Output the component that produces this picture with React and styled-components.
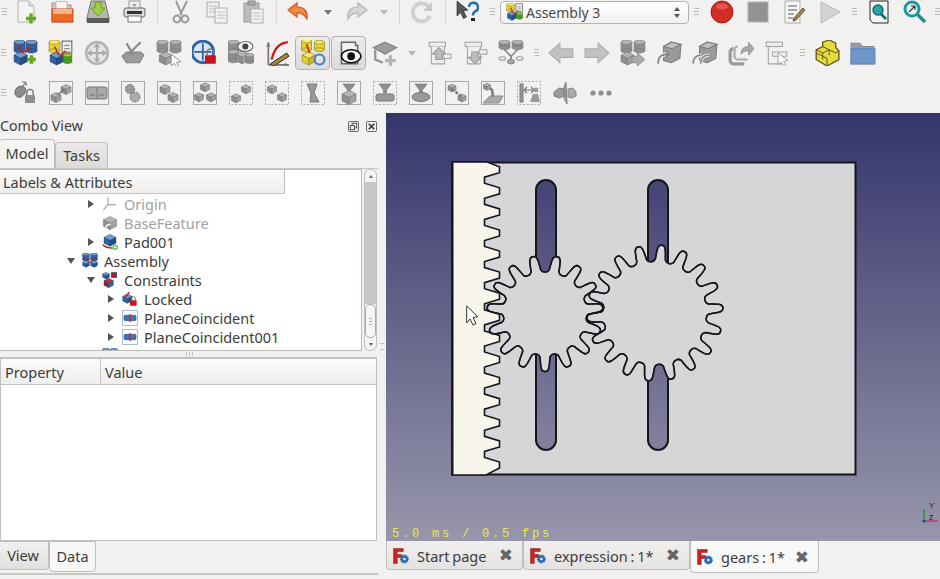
// App.jsx - FreeCAD window with the assembly workbench and a gears model
import React from "react";
import styled, { createGlobalStyle } from "styled-components";

const GlobalStyle = createGlobalStyle`
  html, body { margin: 0; padding: 0; background: #f2f1f0; }
  body { font-family: "Noto Sans", "Open Sans", sans-serif; font-size: 14px; color: #3c3c3c; }
`;

const Window = styled.div`
  width: 940px;
  height: 579px;
  overflow: hidden;
  display: flex;
  flex-direction: column;
  background: #f2f1f0;
`;

const Toolbars = styled.div`
  display: flex;
  flex-direction: column;
  height: 113px;
  flex: none;
`;

const Bar = styled.div`
  display: flex;
  align-items: center;
  height: ${(p) => p.$h}px;
  padding-bottom: ${(p) => p.$pb || 0}px;
  box-sizing: content-box;
  white-space: nowrap;
`;

const Grip = styled.div`
  flex: none;
  width: ${(p) => p.$w || 8}px;
  height: 10px;
  display: flex;
  justify-content: center;
  background: repeating-linear-gradient(#bdbbb8 0 1px, transparent 1px 3px) center / 5px 9px no-repeat;
`;

const Tool = styled.div`
  flex: none;
  box-sizing: border-box;
  width: ${(p) => p.$w || 36}px;
  height: 34px;
  display: flex;
  align-items: center;
  justify-content: center;
  ${(p) =>
    p.$active &&
    `border: 1px solid #b4b2af; border-radius: 4px; margin: 0 1px 0 0; width: 35px;
     background: linear-gradient(#ececea, #dcdbd9);`}
`;

const Separator = styled.div`
  flex: none;
  width: 1px;
  height: 24px;
  margin: 0 ${(p) => p.$m || 6}px;
  background: #dad8d5;
`;

const Caret = styled.div`
  flex: none;
  width: ${(p) => p.$w || 18}px;
  display: flex;
  justify-content: center;
  &::after {
    content: "";
    border-left: 4px solid transparent;
    border-right: 4px solid transparent;
    border-top: 5px solid ${(p) => p.$c || "#b9b9b9"};
  }
`;

const Combo = styled.div`
  flex: none;
  box-sizing: border-box;
  width: 189px;
  height: 23px;
  display: flex;
  align-items: center;
  gap: 2px;
  padding: 0 8px 0 5px;
  border: 1px solid #b5b3b0;
  border-radius: 4px;
  background: linear-gradient(#ffffff, #f1f0ef);
  font-size: 14px;
  color: #4a4a4a;
`;

const ComboLabel = styled.span`
  flex: 1;
`;

const Spinner = styled.div`
  display: flex;
  flex-direction: column;
  gap: 3px;
  &::before, &::after { content: ""; border-left: 3px solid transparent; border-right: 3px solid transparent; }
  &::before { border-bottom: 4px solid #555; }
  &::after { border-top: 4px solid #555; }
`;

const Main = styled.div`
  flex: 1;
  display: flex;
  min-height: 0;
`;

const Dock = styled.div`
  flex: none;
  width: 378px;
  display: flex;
  flex-direction: column;
`;

const VSplit = styled.div`
  flex: none;
  width: 8px;
  display: flex;
  align-items: center;
  justify-content: center;
  &::after { content: ""; width: 4px; height: 5px; border-top: 1px solid #c4c2bf; border-bottom: 1px solid #c4c2bf; }
`;

const TitleRow = styled.div`
  height: 26px;
  display: flex;
  align-items: center;
  gap: 7px;
  flex: none;
  padding-right: 1px;
`;

const Title = styled.div`
  flex: 1;
  font-size: 14.2px;
  padding-bottom: 2px;
`;

const TabRow = styled.div`
  display: flex;
  align-items: flex-end;
  height: ${(p) => p.$h}px;
  flex: none;
`;

const Tab = styled.div`
  box-sizing: border-box;
  width: ${(p) => p.$w}px;
  height: ${(p) => (p.$active ? p.$h + 3 : p.$h)}px;
  display: flex;
  align-items: center;
  justify-content: center;
  padding-bottom: 2px;
  border: 1px solid #c1bfbc;
  border-radius: ${(p) => (p.$up ? "0 0 4px 4px" : "4px 4px 0 0")};
  background: ${(p) =>
    p.$active ? "#f7f7f6" : p.$up ? "linear-gradient(#f2f1f0, #e1e0de)" : "linear-gradient(#ebeae8, #dcdbd9)"};
  font-size: 14.5px;
  flex: none;
`;

const ModelTab = styled(Tab)`
  border-bottom: none;
  ${(p) => p.$active && "background: #f4f4f3; margin-left: -1px;"}
`;

const ViewTab = styled(Tab)`
  ${(p) => !p.$active && "margin-left: -3px;"}
`;

const TreePane = styled.div`
  height: 183px;
  display: flex;
  gap: 2px;
  flex: none;
  border-top: 1px solid #c9c7c4;
  box-sizing: border-box;
`;

const TreeBox = styled.div`
  width: 363px;
  margin-left: -1px;
  box-sizing: border-box;
  border: 1px solid #bcbab7;
  background: #fff;
  overflow: hidden;
  flex: none;
`;

const TreeHeader = styled.div`
  box-sizing: border-box;
  width: 285px;
  height: 24px;
  padding-left: 3px;
  display: flex;
  align-items: center;
  border-right: 1px solid #c4c2bf;
  border-bottom: 1px solid #c4c2bf;
  background: linear-gradient(#fafafa, #efeeed);
  font-size: 14.5px;
`;

const TreeRow = styled.div`
  height: 19px;
  display: flex;
  align-items: center;
  padding-left: ${(p) => 42 + p.$depth * 20}px;
  color: ${(p) => (p.$muted ? "#a2a2a2" : "#3c3c3c")};
  font-size: 14.5px;
`;

const Twisty = styled.div`
  width: 18px;
  margin-right: 2px;
  flex: none;
  display: flex;
  justify-content: center;
  &::after {
    content: "";
    ${(p) =>
      p.$kind === "open"
        ? "border-left: 4px solid transparent; border-right: 4px solid transparent; border-top: 6px solid #555;"
        : p.$kind === "closed"
        ? "border-top: 4px solid transparent; border-bottom: 4px solid transparent; border-left: 6px solid #555;"
        : ""}
  }
`;

const RowLabel = styled.span`
  margin-left: 6px;
`;

const Scrollbar = styled.div`
  width: 13px;
  flex: none;
  box-sizing: border-box;
  border: 1px solid #c3c1be;
  border-radius: 6px;
  display: flex;
  flex-direction: column;
  background: #f4f3f2;
  overflow: hidden;
`;

const ScrollEnd = styled.div`
  height: 12px;
  flex: none;
  display: flex;
  align-items: center;
  justify-content: center;
  &::after {
    content: "";
    border-left: 2px solid transparent;
    border-right: 2px solid transparent;
    ${(p) => (p.$up ? "border-bottom: 3px solid #666;" : "border-top: 3px solid #666;")}
  }
`;

const ScrollTrack = styled.div`
  flex: 1;
  background: #c9c7c5;
`;

const ScrollThumb = styled.div`
  height: 34px;
  flex: none;
  box-sizing: border-box;
  border: 1px solid #aaa8a5;
  border-radius: 5px;
  background: #f6f6f5;
  display: flex;
  align-items: center;
  justify-content: center;
  &::after { content: ""; width: 3px; height: 7px; background: repeating-linear-gradient(#aaa 0 1px, transparent 1px 3px); }
`;

const HSplit = styled.div`
  height: 6px;
  flex: none;
  display: flex;
  justify-content: center;
  align-items: center;
  &::after { content: ""; width: 7px; height: 4px; background: repeating-linear-gradient(90deg, #c4c2bf 0 1px, transparent 1px 3px); }
`;

const PropertyBox = styled.div`
  width: 377px;
  height: 184px;
  flex: none;
  box-sizing: border-box;
  border: 1px solid #c1bfbc;
  border-top-width: 2px;
  background: #fff;
`;

const PropertyHeader = styled.div`
  height: 25px;
  display: grid;
  grid-template-columns: 99px 1fr;
  border-bottom: 1px solid #c4c2bf;
  background: linear-gradient(#fafafa, #efeeed);
`;

const HeaderCell = styled.div`
  padding-left: 4px;
  display: flex;
  align-items: center;
  font-size: 14.5px;
  & + & { border-left: 1px solid #c9c7c4; }
`;

const BottomTabs = styled.div`
  flex: none;
  height: 32px;
  display: flex;
  align-items: flex-start;
  border-bottom: 2px solid #c8c6c3;
`;

const RightColumn = styled.div`
  flex: 1;
  display: flex;
  flex-direction: column;
  min-width: 0;
`;

const Viewport = styled.div`
  position: relative;
  height: 428px;
  flex: none;
  background: linear-gradient(#35356c, #9796ab);
  overflow: hidden;
`;

const Stats = styled.div`
  position: absolute;
  left: 6px;
  bottom: 0;
  font-family: "Liberation Mono", monospace;
  font-size: 12px;
  letter-spacing: 2.8px;
  color: #eaea4a;
`;

const DocTabs = styled.div`
  display: flex;
  align-items: flex-start;
  flex: 1;
`;

const DocTab = styled.div`
  flex: none;
  box-sizing: border-box;
  width: ${(p) => p.$w}px;
  height: ${(p) => (p.$active ? 32 : 29)}px;
  padding: 1px 0 0 5px;
  display: flex;
  align-items: center;
  border: 1px solid #c1bfbc;
  border-top: none;
  border-radius: 0 0 4px 4px;
  background: ${(p) => (p.$active ? "#f8f8f7" : "linear-gradient(#f0efee, #e4e3e1)")};
  font-size: 14.5px;
  word-spacing: -1px;
`;

const DocTabLabel = styled.span`
  margin-left: 7px;
  flex: 1;
`;

const DocClose = styled.span`
  margin-right: 9px;
  font-size: 17px;
  line-height: 1;
  font-weight: 700;
  color: #666;
  font-family: "DejaVu Sans", sans-serif;
`;

/* icon parts */
const GR = { t: "#b4b4b4", l: "#8f8f8f", r: "#a2a2a2", s: "#777" };
const BL = { t: "#6f9fd0", l: "#2f62a0", r: "#234f88", s: "#1c3f70" };
const YL = { t: "#f5ec6a", l: "#e3d335", r: "#c9b92a", s: "#8b8120" };

const Cube = ({ x, y, s = 6, c = GR }) => (
  <g strokeWidth="0.6" stroke={c.s}>
    <polygon fill={c.t} points={`${x},${y - s * 0.5} ${x + s},${y} ${x},${y + s * 0.5} ${x - s},${y}`} />
    <polygon fill={c.l} points={`${x - s},${y} ${x},${y + s * 0.5} ${x},${y + s * 1.5} ${x - s},${y + s}`} />
    <polygon fill={c.r} points={`${x + s},${y} ${x},${y + s * 0.5} ${x},${y + s * 1.5} ${x + s},${y + s}`} />
  </g>
);

const Cyl = ({ x, y, w = 5, h = 8, c = GR }) => (
  <g strokeWidth="0.6" stroke={c.s}>
    <rect x={x - w} y={y} width={w * 2} height={h} fill={c.l} />
    <ellipse cx={x} cy={y + h} rx={w} ry={w * 0.4} fill={c.l} />
    <ellipse cx={x} cy={y} rx={w} ry={w * 0.4} fill={c.t} />
  </g>
);

const Plus = ({ x, y, r = 5 }) => (
  <path d={`M${x - r} ${y}h${r * 2}M${x} ${y - r}v${r * 2}`} stroke="#63a81e" strokeWidth="3.4" />
);

const Lock = ({ x, y, c = "#c8141c" }) => (
  <g>
    <path d={`M${x + 1.8} ${y}v-2.4a3.2 3.2 0 0 1 6.4 0v2.4`} fill="none" stroke="#777" strokeWidth="1.4" />
    <rect x={x} y={y} width="10" height="8" rx="1" fill={c} />
  </g>
);

const Frame = ({ dash }) => (
  <rect x="0.5" y="0.5" width="23" height="23" fill="none" stroke="#a9a9a9" strokeDasharray={dash ? "2 1.6" : "none"} />
);

const Funnel = ({ x = 12, y = 4 }) => (
  <polygon points={`${x - 6},${y} ${x + 6},${y} ${x + 1.5},${y + 6} ${x + 1.5},${y + 9} ${x - 1.5},${y + 9} ${x - 1.5},${y + 6}`} fill="#8f8f8f" stroke="#707070" strokeWidth="0.6" />
);

const DocSheet = ({ x, y, w, h, fill = "#f6f6f6", stroke = "#aaa" }) => (
  <g>
    <rect x={x} y={y} width={w} height={h} fill={fill} stroke={stroke} />
    <path d={`M${x + 2} ${y + 4}h${w - 4}M${x + 2} ${y + 7}h${w - 4}M${x + 2} ${y + 10}h${w - 4}`} stroke={stroke} strokeWidth="0.8" />
  </g>
);

const Svg = ({ size = 26, children }) => (
  <svg width={size} height={size} viewBox="0 0 24 24">
    {children}
  </svg>
);

const icons = {
  newDoc: (
    <>
      <path d="M4 1h11l5 5v16H4z" fill="#f4f4f2" stroke="#b5b5b2" />
      <path d="M15 1v5h5" fill="#ddd" stroke="#b5b5b2" />
      <Plus x={17} y={18.5} />
    </>
  ),
  open: (
    <>
      <path d="M2 3h8l2 2h9v17H2z" fill="#c9c4bb" stroke="#999" />
      <rect x="6" y="1.5" width="11" height="12" fill="#f6f5f2" stroke="#bbb" />
      <rect x="2" y="9" width="21" height="13" fill="#ee6a22" stroke="#c4501a" />
      <rect x="3" y="9" width="19" height="5" fill="#f6b48a" />
    </>
  ),
  save: (
    <>
      <path d="M5 1h14l4 17v4H1v-4z" fill="#b5b7ae" stroke="#777" />
      <rect x="1" y="18" width="22" height="5" fill="#5a5a57" />
      <path d="M9 2h6v6h4l-7 8-7-8h4z" fill="#9ed13f" stroke="#6a9a1c" />
    </>
  ),
  print: (
    <>
      <rect x="7" y="1" width="11" height="8" fill="#f0f0f0" stroke="#999" />
      <path d="M10 4h5l-2.5 3z" fill="#999" />
      <rect x="2" y="8" width="21" height="9" rx="2" fill="#dcdcdc" stroke="#666" />
      <rect x="5" y="11" width="15" height="3" fill="#333" />
      <rect x="6" y="16" width="13" height="6" fill="#fff" stroke="#777" />
    </>
  ),
  cut: (
    <>
      <path d="M7 1l6 14M18 1l-7 14" stroke="#9c9c9c" strokeWidth="2" />
      <circle cx="8" cy="19" r="3.4" fill="none" stroke="#999" strokeWidth="2" />
      <circle cx="16" cy="19" r="3.4" fill="none" stroke="#999" strokeWidth="2" />
    </>
  ),
  copy: (
    <>
      <DocSheet x={2} y={2} w={12} h={15} fill="#efefef" stroke="#aeaeae" />
      <DocSheet x={10} y={8} w={12} h={15} fill="#f3f3f3" stroke="#aeaeae" />
    </>
  ),
  paste: (
    <>
      <rect x="3" y="3" width="15" height="19" fill="#bcbcbc" stroke="#999" />
      <rect x="7" y="1" width="7" height="4" fill="#aaa" stroke="#888" />
      <DocSheet x={10} y={9} w={12} h={14} fill="#f3f3f3" stroke="#aeaeae" />
    </>
  ),
  undo: <path d="M10 3L1 10l9 7v-4c5 0 7 1 10 6 1-8-3-12-10-12z" fill="#f08a3c" stroke="#d8541a" strokeWidth="1.2" />,
  redo: <path d="M14 3l9 7-9 7v-4c-5 0-7 1-10 6-1-8 3-12 10-12z" fill="#d6d6d6" stroke="#b4b4b4" strokeWidth="1.2" />,
  refresh: (
    <>
      <path d="M19 7a9 9 0 1 0 1 9" fill="none" stroke="#d0d0d0" strokeWidth="4" />
      <path d="M22 2v9h-9z" fill="#c8c8c8" />
    </>
  ),
  whats: (
    <>
      <path d="M2 1l11 9-4.5 1 3 6-3 1.5-3-6L2 16z" fill="#555" stroke="#222" strokeWidth="0.6" />
      <path d="M14 7a4.5 4.5 0 1 1 6 4.5c-2 1-2 2-2 4" fill="none" stroke="#1f6fae" strokeWidth="2.4" />
      <rect x="16" y="18" width="4" height="3" fill="#222" />
    </>
  ),
  record: (
    <>
      <circle cx="12" cy="12" r="11" fill="#cf2d26" stroke="#a81f1a" />
      <ellipse cx="12" cy="6.5" rx="6" ry="3" fill="#e2584e" />
    </>
  ),
  stop: <rect x="2" y="2" width="20" height="20" fill="#929292" stroke="#b4b4b4" />,
  macro: (
    <>
      <path d="M3 1h15v22H3z" fill="#f6f6f4" stroke="#aaa" />
      <path d="M6 6h9M6 10h9M6 14h6M6 18h5" stroke="#555" />
      <path d="M12 18l9-10 2 2-9 10-3 1z" fill="#b08a3c" stroke="#333" strokeWidth="0.8" />
    </>
  ),
  play: <polygon points="3,2 22,12 3,23" fill="#d2d2d2" stroke="#b8b8b8" />,
  zoomDoc: (
    <>
      <path d="M3 1h18v22H6l-3-3z" fill="#f2f4f2" stroke="#222" />
      <circle cx="11" cy="10" r="5" fill="#29a6a6" stroke="#0f6a6a" strokeWidth="1.4" />
      <path d="M14 14l5 5" stroke="#0f6a6a" strokeWidth="2.6" />
    </>
  ),
  zoom: (
    <>
      <circle cx="9" cy="9" r="7" fill="#eaf6f6" stroke="#1c9a9c" strokeWidth="3" />
      <path d="M6 12l6-6M12 6h-4M12 6v4" stroke="#333" strokeWidth="1.2" />
      <path d="M14 14l8 8" stroke="#1c8f90" strokeWidth="3.6" />
    </>
  ),
  addAsm: (
    <>
      <Cyl x={7} y={2} c={BL} /><Cyl x={18} y={2} c={BL} />
      <Cube x={8} y={14} c={BL} />
      <path d="M6 4l4 8M18 5l-6 7" stroke="#c9201a" strokeWidth="1.4" />
      <Plus x={18} y={18} r={4} />
    </>
  ),
  addPart: (
    <>
      <Cyl x={6} y={2} c={YL} />
      <DocSheet x={13} y={1} w={9} h={11} fill="#eee" stroke="#666" />
      <Cube x={8} y={14} c={BL} />
      <Cyl x={18} y={14} w={4} h={6} c={{ t: "#9ed13f", l: "#4ea21e", s: "#2f7410" }} />
      <path d="M6 6l4 8M16 10l-5 5" stroke="#c9201a" strokeWidth="1.4" />
    </>
  ),
  navCircle: (
    <>
      <circle cx="12" cy="12" r="10" fill="#e4e4e4" stroke="#b4b4b4" strokeWidth="2.4" />
      <path d="M12 4v16M4 12h16" stroke="#b0b0b0" strokeWidth="2" />
      <path d="M12 3l3 4H9zM12 21l3-4H9zM3 12l4-3v6zM21 12l-4-3v6z" fill="#a8a8a8" />
    </>
  ),
  insert: (
    <>
      <path d="M2 15l4-4h13l3 3-4 7H6z" fill="#9a9a9a" stroke="#808080" />
      <path d="M8 13L19 2M12 13L6 3" stroke="#8a8a8a" strokeWidth="2" />
    </>
  ),
  pickGrey: (
    <>
      <Cyl x={6} y={2} /><Cyl x={18} y={2} />
      <Cube x={9} y={14} />
      <path d="M14 13l9 7-4 .6 2 3-2 1-2-3-3 2z" fill="#fff" stroke="#777" strokeWidth="0.7" />
    </>
  ),
  lockNav: (
    <>
      <circle cx="10" cy="11" r="10" fill="#dfe6f2" stroke="#2e62ad" strokeWidth="2.6" />
      <path d="M10 3v16M2 11h16" stroke="#2e62ad" strokeWidth="1.6" />
      <Lock x={12} y={14} />
    </>
  ),
  eyeAsm: (
    <>
      <Cyl x={5} y={2} /><Cyl x={5} y={11} />
      <Cube x={13} y={13} /><Cyl x={20} y={14} w={4} h={6} />
      <ellipse cx="16" cy="6" rx="7" ry="4.6" fill="#f4f4f4" stroke="#666" />
      <circle cx="16" cy="6" r="2.8" fill="#444" />
    </>
  ),
  axes: (
    <>
      <path d="M4 23V2M4 23h19" stroke="#777" strokeWidth="1.6" />
      <path d="M4 2L2 6h4zM23 23l-4-2v4z" fill="#777" />
      <path d="M7 18C10 6 15 3 22 2" fill="none" stroke="#c8141c" strokeWidth="2" />
      <path d="M6 22L21 12l2 3L9 24z" fill="#b0873c" stroke="#222" strokeWidth="0.9" />
    </>
  ),
  asmYellow: (
    <>
      <Cyl x={6} y={1} w={4.5} h={8} c={YL} /><Cyl x={18} y={2} w={4.5} h={7} c={YL} />
      <Cube x={8} y={14} c={YL} />
      <circle cx="18" cy="18" r="4.6" fill="none" stroke="#4b80b8" strokeWidth="2" />
      <path d="M6 4l3 8" stroke="#c9201a" strokeWidth="1.4" />
    </>
  ),
  eyeDoc: (
    <>
      <path d="M5 2h13v3h2v17H5z" fill="#f0f0f0" stroke="#666" strokeWidth="1.4" />
      <ellipse cx="14" cy="15" rx="9" ry="6" fill="#fff" stroke="#111" strokeWidth="1.6" />
      <circle cx="14" cy="15" r="3.6" fill="#111" />
    </>
  ),
  addDatum: (
    <>
      <polygon points="12,2 23,7 12,13 1,7" fill="#9c9c9c" stroke="#808080" />
      <path d="M3 9v9l7 3" fill="none" stroke="#909090" strokeWidth="2" />
      <path d="M12 19h10M17 14v10" stroke="#b4b4b4" strokeWidth="3" />
    </>
  ),
  importUp: (
    <>
      <rect x="3" y="2" width="15" height="4" fill="#eee" stroke="#a5a5a5" />
      <path d="M5 6v16h12V6" fill="#efefef" stroke="#a5a5a5" />
      <path d="M12 7l6 6h-3v5H9v-5H6z" fill="#bcbcbc" stroke="#999" />
      <rect x="16" y="13" width="7" height="4" fill="#eee" stroke="#a5a5a5" />
    </>
  ),
  importDown: (
    <>
      <rect x="3" y="2" width="15" height="4" fill="#eee" stroke="#a5a5a5" />
      <path d="M5 6v16h12V6" fill="#efefef" stroke="#a5a5a5" />
      <path d="M12 22l6-6h-3v-5H9v5H6z" fill="#bcbcbc" stroke="#999" />
      <rect x="16" y="9" width="7" height="4" fill="#eee" stroke="#a5a5a5" />
    </>
  ),
  tree: (
    <>
      <Cyl x={6} y={2} h={5} /><Cyl x={18} y={2} h={5} />
      <path d="M6 9l6 6M18 9l-6 6M12 15v5" stroke="#888" strokeWidth="1.6" />
      <ellipse cx="12" cy="20" rx="3" ry="2" fill="#aaa" stroke="#888" />
      <ellipse cx="4" cy="17" rx="3" ry="1.6" fill="none" stroke="#999" />
      <ellipse cx="20" cy="17" rx="3" ry="1.6" fill="none" stroke="#999" />
    </>
  ),
  back: <polygon points="1,12 11,3 11,8 23,8 23,16 11,16 11,21" fill="#c2c2c2" stroke="#adadad" />,
  forward: <polygon points="23,12 13,3 13,8 1,8 1,16 13,16 13,21" fill="#c2c2c2" stroke="#adadad" />,
  moveTo: (
    <>
      <Cyl x={6} y={2} /><Cyl x={18} y={2} />
      <Cube x={7} y={14} />
      <polygon points="23,18 16,12 16,15 11,15 11,21 16,21 16,24" fill="#aaa" stroke="#777" strokeWidth="0.6" />
    </>
  ),
  boxArrow: (
    <>
      <polygon points="7,6 14,2 23,4 22,17 14,21 7,19" fill="#9a9a9a" stroke="#7c7c7c" />
      <polygon points="7,6 15,8 23,4 14,2" fill="#c0c0c0" stroke="#7c7c7c" />
      <path d="M2 22c0-7 3-9 10-9" fill="none" stroke="#f2f1f0" strokeWidth="4" />
      <path d="M2 22c0-7 3-9 10-9M12 13l-3-3M12 13l-3 3" fill="none" stroke="#808080" strokeWidth="1.6" />
    </>
  ),
  boxArrows: (
    <>
      <polygon points="7,6 14,2 23,4 22,17 14,21 7,19" fill="#9a9a9a" stroke="#7c7c7c" />
      <polygon points="7,6 15,8 23,4 14,2" fill="#c0c0c0" stroke="#7c7c7c" />
      <path d="M1 22c0-6 3-8 8-8M8 22c0-6 3-8 8-8" fill="none" stroke="#e8e8e8" strokeWidth="3" />
      <path d="M1 22c0-6 3-8 8-8M8 22c0-6 3-8 8-8" fill="none" stroke="#7c7c7c" strokeWidth="1.2" />
    </>
  ),
  shareBox: (
    <>
      <path d="M5 8a3 3 0 0 0-3 3v8a3 3 0 0 0 3 3h10" fill="none" stroke="#9a9a9a" strokeWidth="3" />
      <path d="M9 6a3 3 0 0 0-3 3v6a3 3 0 0 0 3 3h9" fill="none" stroke="#aaa" strokeWidth="2" />
      <path d="M12 13c0-5 3-7 7-7V2l5 6-5 6v-4c-3 0-5 1-7 3z" fill="#a8a8a8" stroke="#8a8a8a" strokeWidth="0.7" />
    </>
  ),
  treePick: (
    <>
      <rect x="2" y="2" width="15" height="4" fill="#eee" stroke="#a5a5a5" />
      <path d="M4 6v16h13M8 11h13v4H8z" fill="#f0f0f0" stroke="#a5a5a5" />
      <path d="M13 12l9 7-4 .6 2 3-2 1-2-3-3 2z" fill="#fff" stroke="#888" strokeWidth="0.7" />
    </>
  ),
  steps: (
    <>
      <polygon points="2,9 8,6 8,2 14,0 20,3 20,7 23,10 23,18 12,24 2,18" fill="#e8dc3c" stroke="#5c5618" strokeWidth="1.2" />
      <path d="M2 9l6 3 6-3 6 3 3-2M8 6l6 3M8 12v6M14 9v5M12 24v-7l-10-5" fill="none" stroke="#5c5618" strokeWidth="0.9" />
    </>
  ),
  folder: (
    <>
      <path d="M1 3h8l2 3h11v16H1z" fill="#9b9ba0" stroke="#888" />
      <rect x="1" y="8" width="22" height="14" fill="#6f96c8" stroke="#5f86b8" />
    </>
  ),
  lockMouse: (
    <>
      <path d="M2 12a6 6 0 0 1 9-6l1 1c2 3-1 7-4 9-3 1-6-1-6-4z" fill="#8d8d8d" stroke="#666" />
      <path d="M9 6l4-5M13 1l-4 0M13 1v4" stroke="#777" strokeWidth="1.2" />
      <Lock x={12} y={14} c="#8f8f8f" />
    </>
  ),
  fLink: (
    <>
      <Frame />
      <Cube x={7} y={14} s={5} /><Cube x={17} y={6} s={5} />
      <path d="M8 14l8-6" stroke="#777" strokeWidth="1.5" />
    </>
  ),
  fBlocks: (
    <>
      <Frame />
      <rect x="2" y="6" width="20" height="12" rx="2" fill="#a8a8a8" stroke="#777" />
      <path d="M12 6v12M5 14h5M14 14h5" stroke="#777" />
    </>
  ),
  fGears: (
    <>
      <Frame />
      <circle cx="9" cy="8" r="4.6" fill="#999" stroke="#777" strokeDasharray="2 1" />
      <circle cx="14" cy="16" r="5" fill="#aaa" stroke="#777" strokeDasharray="2 1" />
    </>
  ),
  fTwo: (
    <>
      <Frame />
      <Cube x={8} y={6} s={5} /><Cube x={16} y={14} s={5} />
    </>
  ),
  fThree: (
    <>
      <Frame />
      <Cube x={12} y={4} s={4.5} /><Cube x={6} y={14} s={4.5} /><Cube x={18} y={14} s={4.5} />
    </>
  ),
  dDiag: (
    <>
      <Frame dash />
      <Cube x={7} y={15} s={4.5} /><Cube x={17} y={6} s={4.5} />
    </>
  ),
  dTwo: (
    <>
      <Frame dash />
      <Cube x={7} y={6} s={4.5} /><Cube x={17} y={14} s={4.5} />
    </>
  ),
  dHour: (
    <>
      <Frame dash />
      <path d="M6 3h10l-3 9 5 9H9l1-9z" fill="#999" stroke="#777" />
    </>
  ),
  fFunnel: (
    <>
      <Frame />
      <Funnel y={3} />
      <Cube x={12} y={13} s={7} />
    </>
  ),
  dFunnel: (
    <>
      <Frame dash />
      <Funnel y={3} />
      <rect x="3" y="13" width="18" height="7" rx="2" fill="#999" stroke="#777" />
    </>
  ),
  fDisc: (
    <>
      <Frame />
      <Funnel y={3} />
      <ellipse cx="12" cy="16" rx="9" ry="4.5" fill="#999" stroke="#777" />
    </>
  ),
  fChain: (
    <>
      <Frame />
      <Cube x={7} y={5} s={4} /><Cube x={17} y={15} s={4} />
      <path d="M7 8l10 8" stroke="#777" strokeWidth="2.5" strokeDasharray="3 1.5" />
    </>
  ),
  fPlane: (
    <>
      <Frame />
      <polygon points="2,22 9,15 22,15 18,22" fill="#aaa" stroke="#888" />
      <path d="M5 4l6 5 1 6" stroke="#777" strokeWidth="2.4" fill="none" />
      <Cube x={6} y={4} s={3.5} />
    </>
  ),
  dDist: (
    <>
      <Frame dash />
      <rect x="3" y="3" width="3" height="18" fill="#999" stroke="#777" />
      <path d="M7 9h10M7 9l3-3M7 9l3 3M17 9l-3-3M17 9l-3 3" stroke="#777" strokeWidth="1.2" fill="none" />
      <circle cx="19" cy="9" r="2.4" fill="#999" />
      <polygon points="13,21 16,13 21,13 23,21" fill="#999" />
    </>
  ),
  mirror: (
    <>
      <polygon points="13,1 14,23 11,17 11,6" fill="#9a9a9a" stroke="#808080" />
      <polygon points="1,11 6,7 11,8 11,15 6,17 1,15" fill="#9a9a9a" stroke="#808080" />
      <polygon points="15,8 20,7 23,11 23,15 19,17 15,16" fill="#aaa" stroke="#888" />
    </>
  ),
  dots: (
    <>
      <circle cx="4" cy="12" r="2.6" fill="#8e8e8e" />
      <circle cx="12" cy="12" r="2.6" fill="#8e8e8e" />
      <circle cx="20" cy="12" r="2.6" fill="#8e8e8e" />
    </>
  ),
  freecad: (
    <>
      <path d="M2 2h13v4H7v4h6v4H7v8H2z" fill="#c8231e" stroke="#7a1412" strokeWidth="0.6" />
      <circle cx="16.5" cy="16" r="5" fill="#2f6bb0" stroke="#2f6bb0" strokeWidth="2" strokeDasharray="1.6 1.2" />
      <circle cx="16.5" cy="16" r="1.8" fill="#e8eef6" />
    </>
  ),
  origin: <path d="M9 13V2M9 13L2 21M9 13h12" fill="none" stroke="#a8a8a8" strokeWidth="1.8" />,
  baseFeature: (
    <>
      <Cube x={12} y={7} s={10} />
      <path d="M6 19c0-4 3-5 7-5" stroke="#eee" strokeWidth="2.4" fill="none" />
    </>
  ),
  pad: (
    <>
      <Cube x={12} y={5} s={9} c={BL} />
      <path d="M1 16c4 4 10 5 15 5" stroke="#b01a1a" strokeWidth="2" fill="none" />
      <circle cx="20" cy="20" r="3" fill="#fff" stroke="#3ccf2a" strokeWidth="2" />
    </>
  ),
  assembly: (
    <>
      <Cyl x={6} y={2} c={BL} /><Cyl x={18} y={2} c={BL} />
      <Cube x={6} y={14} s={5} c={BL} /><Cube x={18} y={14} s={5} c={BL} />
      <path d="M5 7l7 7M19 7l-7 7" stroke="#c9201a" strokeWidth="1.6" />
    </>
  ),
  constraints: (
    <>
      <Cube x={6} y={3} s={5} c={BL} /><rect x="14" y="1" width="8" height="7" fill="#b01a22" stroke="#1c3f70" />
      <Cube x={10} y={13} s={7} c={{ ...BL, t: "#c03038", l: "#a01a20", r: "#2f62a0" }} />
    </>
  ),
  locked: (
    <>
      <Cube x={8} y={8} s={7} c={BL} />
      <path d="M4 10L11 2" stroke="#c9201a" strokeWidth="2.4" />
      <Lock x={12} y={14} />
    </>
  ),
  plane: (
    <>
      <rect x="1" y="1" width="22" height="22" fill="#fff" stroke="#7b9cc7" />
      <rect x="3" y="8" width="18" height="8" rx="2" fill="#3c74b4" stroke="#25507f" />
      <rect x="11" y="6" width="2" height="12" fill="#d22" />
    </>
  ),
  floatPane: (
    <>
      <rect x="1" y="1" width="22" height="22" rx="3" fill="none" stroke="#555" strokeWidth="2" />
      <rect x="9" y="5" width="10" height="10" fill="none" stroke="#444" strokeWidth="2" />
      <rect x="5" y="10" width="9" height="9" fill="#f2f1f0" stroke="#444" strokeWidth="2" />
    </>
  ),
  closePane: (
    <>
      <rect x="1" y="1" width="22" height="22" rx="3" fill="none" stroke="#555" strokeWidth="2" />
      <path d="M6 6l12 12M18 6L6 18" stroke="#333" strokeWidth="3.6" />
    </>
  ),
};

const Icon = ({ name, size }) => <Svg size={size}>{icons[name]}</Svg>;

const row1Start = ["newDoc", "open", "save", "print"];
const row1Edit = ["cut", "copy", "paste"];
const row2A = ["addAsm", "addPart", "navCircle", "insert", "pickGrey", "lockNav", "eyeAsm", "axes"];
const row2B = ["importUp", "importDown", "tree"];
const row2C = ["back", "forward", "moveTo", "boxArrow", "boxArrows", "shareBox", "treePick"];
const row3 = [
  "lockMouse", "fLink", "fBlocks", "fGears", "fTwo", "fThree", "dDiag", "dTwo", "dHour",
  "fFunnel", "dFunnel", "fDisc", "fChain", "fPlane", "dDist", "mirror", "dots",
];

const treeRows = [
  { depth: 2, kind: "closed", icon: "origin", label: "Origin", muted: true },
  { depth: 2, kind: "none", icon: "baseFeature", label: "BaseFeature", muted: true },
  { depth: 2, kind: "closed", icon: "pad", label: "Pad001" },
  { depth: 1, kind: "open", icon: "assembly", label: "Assembly" },
  { depth: 2, kind: "open", icon: "constraints", label: "Constraints" },
  { depth: 3, kind: "closed", icon: "locked", label: "Locked" },
  { depth: 3, kind: "closed", icon: "plane", label: "PlaneCoincident" },
  { depth: 3, kind: "closed", icon: "plane", label: "PlaneCoincident001" },
  { depth: 2, kind: "closed", icon: "assembly", label: "" },
];

// gear outline with narrow rounded teeth, angles in degrees and y pointing down
const gearPath = (cx, cy, rootR, tipR, teeth, startDeg) => {
  const pitch = (Math.PI * 2) / teeth;
  const pt = (r, a) => `${(cx + r * Math.cos(a)).toFixed(2)} ${(cy + r * Math.sin(a)).toFixed(2)}`;
  let d = "";
  for (let i = 0; i < teeth; i++) {
    const a = (startDeg * Math.PI) / 180 + i * pitch;
    const h = tipR - rootR;
    d += `${i === 0 ? "M" : "L"}${pt(rootR - 0.5, a - pitch * 0.5)}`;
    d += `Q${pt(rootR - 0.5, a - pitch * 0.34)} ${pt(rootR + h * 0.12, a - pitch * 0.27)}`;
    d += `C${pt(rootR + h * 0.55, a - pitch * 0.2)} ${pt(tipR + 1, a - pitch * 0.2)} ${pt(tipR, a)}`;
    d += `C${pt(tipR + 1, a + pitch * 0.2)} ${pt(rootR + h * 0.55, a + pitch * 0.2)} ${pt(rootR + h * 0.12, a + pitch * 0.27)}`;
    d += `Q${pt(rootR - 0.5, a + pitch * 0.34)} ${pt(rootR - 0.5, a + pitch * 0.5)}`;
  }
  return d + "Z";
};

// rack teeth down the right edge of the cream bar
const rackPath = () => {
  const rootX = 484.5;
  const tipX = 499.5;
  const step = 21.09;
  const first = 169.7;
  let d = `M452 162H487L${tipX} ${first - 3}V${first + 3}`;
  for (let i = 0; i < 14; i++) {
    const c = first + i * step;
    const mid = c + step / 2;
    d += `L${rootX} ${(mid - 3).toFixed(1)}V${(mid + 3).toFixed(1)}L${tipX} ${(c + step - 3).toFixed(1)}V${(c + step + 3).toFixed(1)}`;
  }
  return d + "L486 475H452Z";
};

const gearA = gearPath(545, 313.5, 42, 58, 15, 90);
const gearB = gearPath(655, 313, 52, 68, 18, -84.3);
const rack = rackPath();
const INK = "#15151d";

const GearsScene = () => (
  <svg width="554" height="428" viewBox="386 113 554 428">
    <defs>
      <linearGradient id="sky" gradientUnits="userSpaceOnUse" x1="0" y1="113" x2="0" y2="541">
        <stop offset="0" stopColor="#35356c" />
        <stop offset="1" stopColor="#9796ab" />
      </linearGradient>
    </defs>
    <rect x="452.5" y="162.5" width="403" height="312" fill="#d6d5d8" stroke={INK} strokeWidth="2" />
    <rect x="536" y="180" width="20" height="270" rx="10" fill="url(#sky)" stroke={INK} strokeWidth="2" />
    <rect x="648" y="180" width="20" height="270" rx="10" fill="url(#sky)" stroke={INK} strokeWidth="2" />
    <path d={gearB} fill="#d6d5d8" stroke={INK} strokeWidth="1.5" />
    <path d={gearA} fill="#d6d5d8" stroke={INK} strokeWidth="1.5" />
    <path d={rack} fill="#f8f5ea" stroke={INK} strokeWidth="1.6" />
    <path d={gearA} fill="none" stroke={INK} strokeWidth="1.5" />
    <path d={gearB} fill="none" stroke={INK} strokeWidth="1.5" />
    <path d="M452.5 162.5V474.5" stroke={INK} strokeWidth="2" />
    <path d="M466.7 306L477.7 316.7L473 317.5L476 323.5L473 325L470 319L466.7 323Z" fill="#fff" stroke="#333" strokeWidth="1" />
    <path d="M924 521V509" stroke="#2f8f3f" strokeWidth="1.5" />
    <path d="M924 521H938" stroke="#c8323a" strokeWidth="1.2" />
    <circle cx="924" cy="521" r="1.6" fill="#2b3fa8" />
    <text x="929" y="520" fontFamily="Liberation Sans, sans-serif" fontSize="9" fill="#222">z</text>
    <text x="929" y="508" fontFamily="Liberation Sans, sans-serif" fontSize="8" fill="#222">Y</text>
  </svg>
);

export default function App() {
  return (
    <>
      <GlobalStyle />
      <Window>
        <Toolbars>
          <Bar $h={24} $pb={9}>
            <Grip />
            {row1Start.map((n) => (
              <Tool key={n}><Icon name={n} size={24} /></Tool>
            ))}
            <Separator $m={5} />
            {row1Edit.map((n) => (
              <Tool key={n}><Icon name={n} size={24} /></Tool>
            ))}
            <Separator $m={5} />
            <Tool $w={33}><Icon name="undo" size={24} /></Tool>
            <Caret $w={26} $c="#777" />
            <Tool $w={30}><Icon name="redo" size={24} /></Tool>
            <Caret $w={26} />
            <Separator $m={2} />
            <Tool $w={40}><Icon name="refresh" size={24} /></Tool>
            <Separator $m={3} />
            <Tool><Icon name="whats" size={24} /></Tool>
            <Grip $w={15} />
            <Combo>
              <Icon name="addPart" size={18} />
              <ComboLabel>Assembly 3</ComboLabel>
              <Spinner />
            </Combo>
            <Grip $w={15} />
            <Tool><Icon name="record" size={24} /></Tool>
            <Tool><Icon name="stop" size={24} /></Tool>
            <Tool><Icon name="macro" size={24} /></Tool>
            <Tool><Icon name="play" size={24} /></Tool>
            <Grip $w={13} />
            <Tool><Icon name="zoomDoc" size={24} /></Tool>
            <Tool><Icon name="zoom" size={24} /></Tool>
            <Grip $w={8} />
            <Tool $w={6}><Icon name="stop" size={6} /></Tool>
          </Bar>
          <Bar $h={40}>
            <Grip $w={7} />
            {row2A.map((n) => (
              <Tool key={n}><Icon name={n} /></Tool>
            ))}
            <Tool $active><Icon name="asmYellow" /></Tool>
            <Tool $active><Icon name="eyeDoc" /></Tool>
            <Tool><Icon name="addDatum" /></Tool>
            <Caret $w={18} />
            {row2B.map((n) => (
              <Tool key={n}><Icon name={n} /></Tool>
            ))}
            <Grip $w={14} />
            {row2C.map((n) => (
              <Tool key={n}><Icon name={n} /></Tool>
            ))}
            <Grip $w={14} />
            <Tool><Icon name="steps" /></Tool>
            <Tool><Icon name="folder" /></Tool>
          </Bar>
          <Bar $h={40}>
            <Grip $w={7} />
            {row3.map((n) => (
              <Tool key={n}><Icon name={n} size={24} /></Tool>
            ))}
          </Bar>
        </Toolbars>
        <Main>
          <Dock>
            <TitleRow>
              <Title>Combo View</Title>
              <Icon name="floatPane" size={11} />
              <Icon name="closePane" size={11} />
            </TitleRow>
            <TabRow $h={29}>
              <ModelTab $w={56} $h={26} $active>Model</ModelTab>
              <ModelTab $w={53} $h={26}>Tasks</ModelTab>
            </TabRow>
            <TreePane>
              <TreeBox>
                <TreeHeader>Labels &amp; Attributes</TreeHeader>
                {treeRows.map((r, i) => (
                  <TreeRow key={i} $depth={r.depth} $muted={r.muted}>
                    <Twisty $kind={r.kind} />
                    <Icon name={r.icon} size={16} />
                    <RowLabel>{r.label}</RowLabel>
                  </TreeRow>
                ))}
              </TreeBox>
              <Scrollbar>
                <ScrollEnd $up />
                <ScrollTrack />
                <ScrollThumb />
                <ScrollEnd />
              </Scrollbar>
            </TreePane>
            <HSplit />
            <PropertyBox>
              <PropertyHeader>
                <HeaderCell>Property</HeaderCell>
                <HeaderCell>Value</HeaderCell>
              </PropertyHeader>
            </PropertyBox>
            <BottomTabs>
              <ViewTab $up $w={52} $h={29}>View</ViewTab>
              <ViewTab $up $active $w={47} $h={28}>Data</ViewTab>
            </BottomTabs>
          </Dock>
          <VSplit />
          <RightColumn>
            <Viewport>
              <GearsScene />
              <Stats>5.0 ms / 0.5 fps</Stats>
            </Viewport>
            <DocTabs>
              <DocTab $w={137}>
                <Icon name="freecad" size={18} />
                <DocTabLabel>Start page</DocTabLabel>
                <DocClose>✖</DocClose>
              </DocTab>
              <DocTab $w={167}>
                <Icon name="freecad" size={18} />
                <DocTabLabel>expression : 1*</DocTabLabel>
                <DocClose>✖</DocClose>
              </DocTab>
              <DocTab $w={129} $active>
                <Icon name="freecad" size={18} />
                <DocTabLabel>gears : 1*</DocTabLabel>
                <DocClose>✖</DocClose>
              </DocTab>
            </DocTabs>
          </RightColumn>
        </Main>
      </Window>
    </>
  );
}
